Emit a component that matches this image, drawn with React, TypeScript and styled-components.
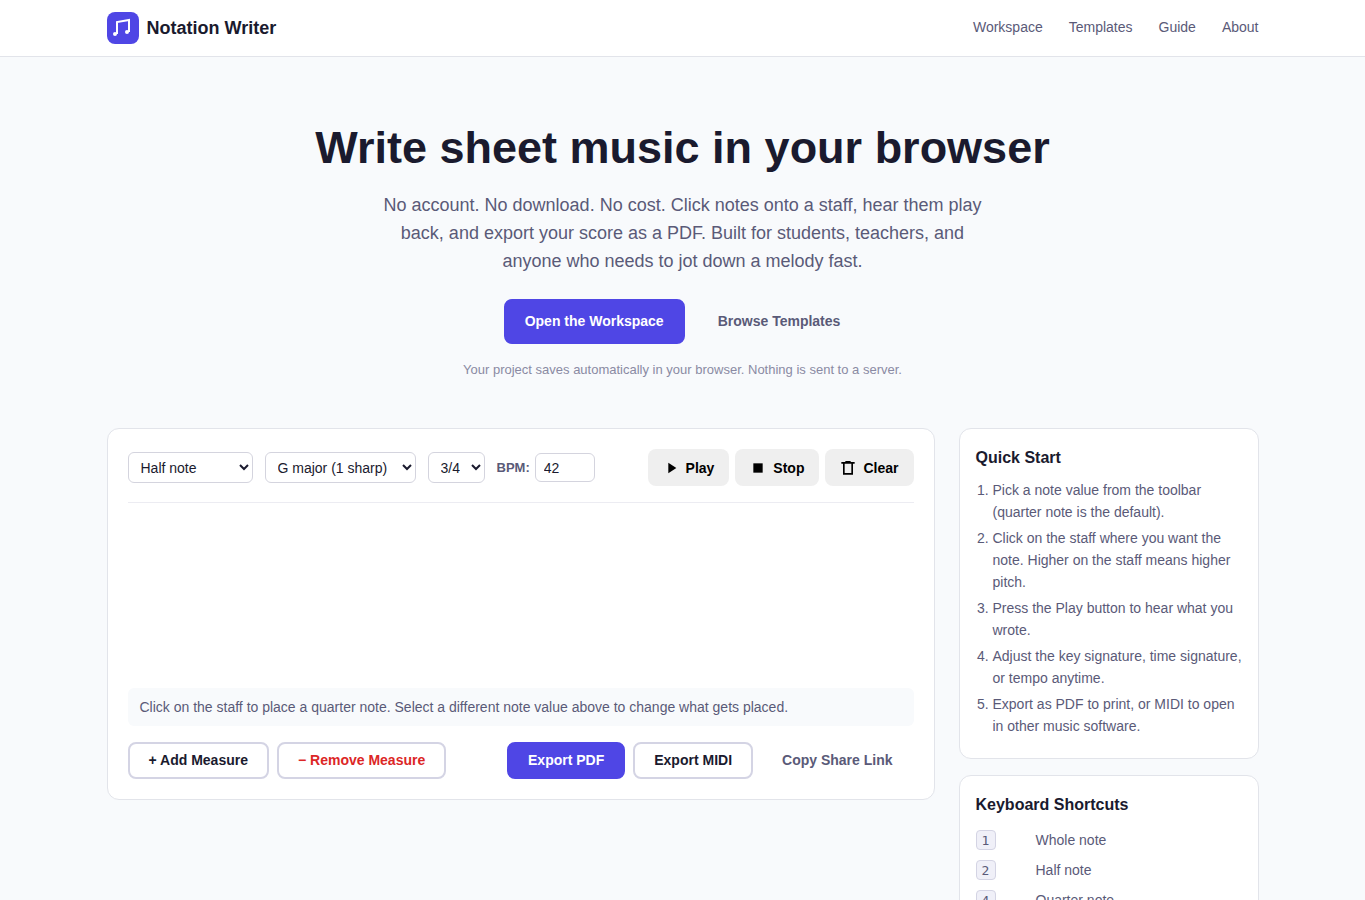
import React from "react";
import styled, { createGlobalStyle, css } from "styled-components";

const Global = createGlobalStyle`
  *, *::before, *::after { box-sizing: border-box; }
  body {
    margin: 0;
    background: #f8fafc;
    color: #1a1a2e;
    font-family: "Liberation Sans", Arial, sans-serif;
    font-size: 14px;
    line-height: 22px;
  }
  h1, h2, p { margin: 0; }
  button, input, select { font-family: inherit; }
`;

const Container = styled.div`
  max-width: 1200px;
  margin: 0 auto;
  padding: 0 24px;
`;

const Header = styled.header`
  background: #fff;
  border-bottom: 1px solid #e2e4ea;
`;

const HeaderRow = styled(Container)`
  display: flex;
  align-items: center;
  justify-content: space-between;
  padding-top: 12px;
  padding-bottom: 12px;
`;

const Brand = styled.a`
  display: flex;
  align-items: center;
  gap: 8px;
  color: #1a1a2e;
  font-size: 18px;
  font-weight: 700;
  text-decoration: none;
`;

const Nav = styled.nav`
  display: flex;
  gap: 26px;
  padding-bottom: 2px;
  font-size: 14px;
`;

const NavLink = styled.a`
  color: #5a5a78;
  text-decoration: none;
`;

const Hero = styled.section`
  display: flex;
  flex-direction: column;
  align-items: center;
  padding: 64px 24px 48px;
  text-align: center;
`;

const Title = styled.h1`
  font-size: 45px;
  line-height: 54px;
`;

const Lead = styled.p`
  max-width: 600px;
  margin-top: 16px;
  color: #5a5a78;
  font-size: 18px;
  line-height: 28px;
`;

const HeroActions = styled.div`
  display: flex;
  gap: 12px;
  margin: 24px 0 16px;
`;

const Note = styled.p`
  color: #8a8aa3;
  font-size: 13px;
  line-height: 20px;
`;

type Variant = "primary" | "outline" | "danger" | "ghost";

const buttonLook = css<{ $variant: Variant }>`
  display: inline-flex;
  align-items: center;
  justify-content: center;
  padding: 0 19px 2px;
  border: 2px solid transparent;
  border-radius: 8px;
  background: transparent;
  color: #5a5a78;
  font-size: 14px;
  font-weight: 700;
  text-decoration: none;
  white-space: nowrap;
  cursor: pointer;
  ${({ $variant }) => $variant === "primary" && css`
    border-color: #4f46e5;
    background: #4f46e5;
    color: #fff;
  `}
  ${({ $variant }) => ($variant === "outline" || $variant === "danger") && css`
    border-color: #d4d4e4;
    background: #fff;
    color: ${$variant === "danger" ? "#dc2626" : "#1a1a2e"};
  `}
`;

const HeroLink = styled.a<{ $variant: Variant }>`
  ${buttonLook}
  height: 45px;
`;

const ActionButton = styled.button<{ $variant: Variant }>`
  ${buttonLook}
  height: 37px;
`;

const Layout = styled(Container)`
  display: grid;
  grid-template-columns: minmax(0, 1fr) 300px;
  gap: 24px;
  align-items: start;
  padding-bottom: 48px;
`;

const Card = styled.section`
  border: 1px solid #e2e4ea;
  border-radius: 12px;
  background: #fff;
`;

const Editor = styled(Card)`
  padding: 20px;
`;

const Toolbar = styled.div`
  display: flex;
  flex-wrap: wrap;
  align-items: center;
  gap: 12px;
  padding-bottom: 16px;
  border-bottom: 1px solid #ececf2;
`;

const Select = styled.select<{ $width: number }>`
  width: ${({ $width }) => $width}px;
  height: 31px;
  padding: 0 8px;
  border: 1px solid #d4d4de;
  border-radius: 6px;
  background: #fff;
  color: #1a1a2e;
  font-size: 14px;
`;

const Tempo = styled.label`
  display: flex;
  align-items: center;
  gap: 5px;
  color: #5a5a78;
  font-size: 13px;
  font-weight: 700;
`;

const TempoInput = styled.input`
  width: 60px;
  height: 29px;
  padding: 0 8px;
  border: 1px solid #d4d4de;
  border-radius: 6px;
  background: #fff;
  color: #1a1a2e;
  font-size: 14px;
  appearance: textfield;
`;

const Transport = styled.div`
  display: flex;
  gap: 6px;
  margin-left: auto;
`;

const TransportButton = styled.button`
  display: flex;
  align-items: center;
  gap: 7px;
  height: 37px;
  padding: 0 15px;
  border: 0;
  border-radius: 8px;
  background: #efefef;
  color: #000;
  font-size: 14px;
  font-weight: 700;
  cursor: pointer;
`;

const Staff = styled.div`
  height: 185px;
`;

const Hint = styled.p`
  padding: 8px 12px;
  border-radius: 6px;
  background: #f8fafc;
  color: #5a5a78;
`;

const EditorActions = styled.div`
  display: flex;
  flex-wrap: wrap;
  gap: 8px;
  margin-top: 16px;
`;

const ActionGroup = styled.div<{ $end?: boolean }>`
  display: flex;
  gap: 8px;
  margin-left: ${({ $end }) => ($end ? "auto" : "0")};
`;

const Sidebar = styled.aside`
  display: grid;
  gap: 16px;
`;

const SideCard = styled(Card)`
  padding: 16px 12px 17px 16px;
`;

const SideTitle = styled.h2`
  margin-bottom: 7px;
  font-size: 16px;
  line-height: 26px;
`;

const Steps = styled.ol`
  margin: 8px 0 0;
  padding-left: 17px;
  color: #5a5a78;
`;

const Step = styled.li`
  margin-bottom: 4px;
`;

const Shortcuts = styled.table`
  width: 100%;
  border-collapse: collapse;
  color: #5a5a78;
`;

const KeyCell = styled.th`
  width: 60px;
  height: 30px;
  padding: 0;
  text-align: left;
  font-weight: 400;
`;

const LabelCell = styled.td`
  padding: 0;
`;

const Key = styled.kbd`
  display: block;
  width: 20px;
  height: 20px;
  border: 1px solid #d4d4e4;
  border-radius: 4px;
  background: #f0f0f8;
  font-family: "DejaVu Sans Mono", monospace;
  font-size: 13px;
  line-height: 19px;
  text-align: center;
`;

const navItems = ["Workspace", "Templates", "Guide", "About"];

const steps = [
  "Pick a note value from the toolbar (quarter note is the default).",
  "Click on the staff where you want the note. Higher on the staff means higher pitch.",
  "Press the Play button to hear what you wrote.",
  "Adjust the key signature, time signature, or tempo anytime.",
  "Export as PDF to print, or MIDI to open in other music software.",
];

const shortcuts = [
  ["1", "Whole note"],
  ["2", "Half note"],
  ["4", "Quarter note"],
];

const Logo = () => (
  <svg width="32" height="32" viewBox="0 0 32 32" aria-hidden="true">
    <rect width="32" height="32" rx="8" fill="#4f46e5" />
    <path d="M10 22V10l12-2v12" fill="none" stroke="#fff" strokeWidth="2" />
    <circle cx="8" cy="22" r="2" fill="#fff" />
    <circle cx="20" cy="20" r="2" fill="#fff" />
  </svg>
);

const Icon = ({ d }: { d: string }) => (
  <svg width="16" height="16" viewBox="0 0 24 24" fill="currentColor" fillRule="evenodd" aria-hidden="true">
    <path d={d} />
  </svg>
);

const playPath = "M8 4v16l12-8z";
const stopPath = "M5 5h14v14H5z";
const clearPath = "M8 1.5h8V3h6v2.5h-2.5V22h-15V5.5H2V3h6zM7 5.5v14h10v-14z";

export default function App() {
  return (
    <>
      <Global />
      <Header>
        <HeaderRow>
          <Brand href="#">
            <Logo />
            Notation Writer
          </Brand>
          <Nav>
            {navItems.map((item) => (
              <NavLink key={item} href={`#${item.toLowerCase()}`}>{item}</NavLink>
            ))}
          </Nav>
        </HeaderRow>
      </Header>
      <main>
        <Hero>
          <Title>Write sheet music in your browser</Title>
          <Lead>
            No account. No download. No cost. Click notes onto a staff, hear them play back, and
            export your score as a PDF. Built for students, teachers, and anyone who needs to jot
            down a melody fast.
          </Lead>
          <HeroActions>
            <HeroLink href="#workspace" $variant="primary">Open the Workspace</HeroLink>
            <HeroLink href="#templates" $variant="ghost">Browse Templates</HeroLink>
          </HeroActions>
          <Note>Your project saves automatically in your browser. Nothing is sent to a server.</Note>
        </Hero>
        <Layout id="workspace">
          <Editor>
            <Toolbar>
              <Select $width={125} aria-label="Note value" defaultValue="Half note">
                <option>Whole note</option>
                <option>Half note</option>
                <option>Quarter note</option>
              </Select>
              <Select $width={151} aria-label="Key signature" defaultValue="G major (1 sharp)">
                <option>C major</option>
                <option>G major (1 sharp)</option>
              </Select>
              <Select $width={57} aria-label="Time signature" defaultValue="3/4">
                <option>4/4</option>
                <option>3/4</option>
              </Select>
              <Tempo>
                BPM:
                <TempoInput type="number" defaultValue={42} />
              </Tempo>
              <Transport>
                <TransportButton type="button"><Icon d={playPath} />Play</TransportButton>
                <TransportButton type="button"><Icon d={stopPath} />Stop</TransportButton>
                <TransportButton type="button"><Icon d={clearPath} />Clear</TransportButton>
              </Transport>
            </Toolbar>
            <Staff />
            <Hint>
              Click on the staff to place a quarter note. Select a different note value above to
              change what gets placed.
            </Hint>
            <EditorActions>
              <ActionGroup>
                <ActionButton type="button" $variant="outline">+ Add Measure</ActionButton>
                <ActionButton type="button" $variant="danger">− Remove Measure</ActionButton>
              </ActionGroup>
              <ActionGroup $end>
                <ActionButton type="button" $variant="primary">Export PDF</ActionButton>
                <ActionButton type="button" $variant="outline">Export MIDI</ActionButton>
                <ActionButton type="button" $variant="ghost">Copy Share Link</ActionButton>
              </ActionGroup>
            </EditorActions>
          </Editor>
          <Sidebar>
            <SideCard>
              <SideTitle>Quick Start</SideTitle>
              <Steps>
                {steps.map((step) => <Step key={step}>{step}</Step>)}
              </Steps>
            </SideCard>
            <SideCard>
              <SideTitle>Keyboard Shortcuts</SideTitle>
              <Shortcuts>
                <tbody>
                  {shortcuts.map(([key, label]) => (
                    <tr key={key}>
                      <KeyCell scope="row"><Key>{key}</Key></KeyCell>
                      <LabelCell>{label}</LabelCell>
                    </tr>
                  ))}
                </tbody>
              </Shortcuts>
            </SideCard>
          </Sidebar>
        </Layout>
      </main>
    </>
  );
}
